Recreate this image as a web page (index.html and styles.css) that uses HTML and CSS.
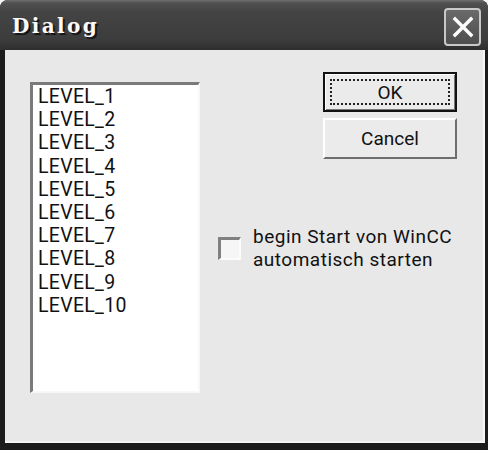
FILE: index.html
```html
<!DOCTYPE html>
<html>
<head>
<meta charset="utf-8">
<link rel="stylesheet" href="styles.css">
</head>
<body>
<div class="window">
  <div class="titlebar">
    <span class="title">Dialog</span>
    <div class="close">
      <svg width="24" height="24" viewBox="0 0 24 24"><path d="M4 4 L20 20 M20 4 L4 20" stroke="#fff" stroke-width="3.4" stroke-linecap="square"/></svg>
    </div>
  </div>
  <div class="client">
    <div class="listbox">
      <div class="item">LEVEL_1</div>
      <div class="item">LEVEL_2</div>
      <div class="item">LEVEL_3</div>
      <div class="item">LEVEL_4</div>
      <div class="item">LEVEL_5</div>
      <div class="item">LEVEL_6</div>
      <div class="item">LEVEL_7</div>
      <div class="item">LEVEL_8</div>
      <div class="item">LEVEL_9</div>
      <div class="item">LEVEL_10</div>
    </div>
    <div class="side">
      <div class="buttons">
        <div class="btn default"><span class="focus">OK</span></div>
        <div class="btn">Cancel</div>
      </div>
      <div class="check">
        <div class="box"></div>
        <div class="label">
          <div class="line">begin Start von WinCC</div>
          <div class="line">automatisch starten</div>
        </div>
      </div>
    </div>
  </div>
</div>
</body>
</html>
```
FILE: styles.css
```css
html, body { margin: 0; padding: 0; background: #f4f4f4; }
body { width: 488px; height: 450px; overflow: hidden; }
.window {
  width: 488px; height: 450px; box-sizing: border-box;
  background: #1c1c1c;
  border-radius: 8px 8px 0 0;
  display: flex; flex-direction: column;
  font-family: Roboto, "Liberation Sans", Arial, sans-serif;
}
.titlebar {
  height: 50px; flex: none;
  display: flex; align-items: center; justify-content: space-between;
  padding: 0 7px 0 12px;
  border-radius: 8px 8px 0 0;
  background: linear-gradient(#707070 0, #505050 3px, #444 12px, #3c3c3c 40px, #2e2e2e 50px);
}
.title {
  font-family: "DejaVu Serif", "Liberation Serif", serif;
  font-weight: bold; font-size: 20px; color: #fafafa;
  letter-spacing: 2.4px;
  text-shadow: 2px 2px 0 #151515;
  margin-top: 2px;
}
.close {
  width: 33px; height: 34px;
  border: 2px solid #c8c8c8; border-radius: 4px;
  background: linear-gradient(#6a6a6a, #4e4e4e);
  display: flex; align-items: center; justify-content: center;
  margin-top: 4px;
}
.client {
  flex: 1;
  margin: 0 3px 7px 5px;
  background: #e8e8e8;
  border-bottom: 2px solid #f6f6f6;
  border-right: 2px solid #f6f6f6;
  display: flex;
  padding: 22px 0 0 25px;
}
.listbox {
  margin-top: 10px;
  width: 170px; height: 311px; box-sizing: border-box;
  background: #fff;
  border-top: 3px solid #7a7a7a;
  border-left: 3px solid #7a7a7a;
  border-right: 2px solid #f8f8f8;
  border-bottom: 2px solid #f8f8f8;
  padding: 0 0 0 5px;
}
.item {
  font-size: 19.5px; line-height: 23.2px; color: #111;
  letter-spacing: 0.3px;
}
.side {
  margin-left: 18px;
  display: flex; flex-direction: column;
}
.buttons {
  margin-left: 105px;
  display: flex; flex-direction: column; gap: 6px;
}
.btn {
  width: 134px; height: 41px; box-sizing: border-box;
  background: #ebebeb;
  border-top: 2px solid #fff; border-left: 2px solid #fff;
  border-right: 2px solid #6e6e6e; border-bottom: 2px solid #6e6e6e;
  display: flex; align-items: center; justify-content: center;
  font-size: 19px; color: #111;
}
.btn.default {
  height: 40px;
  border: 2px solid #111;
  box-shadow: inset 1px 1px 0 #fff, inset -1px -1px 0 #777;
}
.focus {
  width: 120px; height: 26px; box-sizing: border-box;
  border: 2px dotted #222;
  display: flex; align-items: center; justify-content: center;
}
.check {
  margin-top: 67px;
  display: flex; align-items: center; gap: 12px;
}
.box {
  width: 23px; height: 23px; box-sizing: border-box;
  background: #f6f6f6;
  border-top: 3px solid #808080; border-left: 3px solid #808080;
  border-right: 2px solid #fcfcfc; border-bottom: 2px solid #fcfcfc;
}
.label {
  display: flex; flex-direction: column;
}
.line {
  font-size: 19px; line-height: 22.5px; color: #111;
  letter-spacing: 0.5px;
}
```
